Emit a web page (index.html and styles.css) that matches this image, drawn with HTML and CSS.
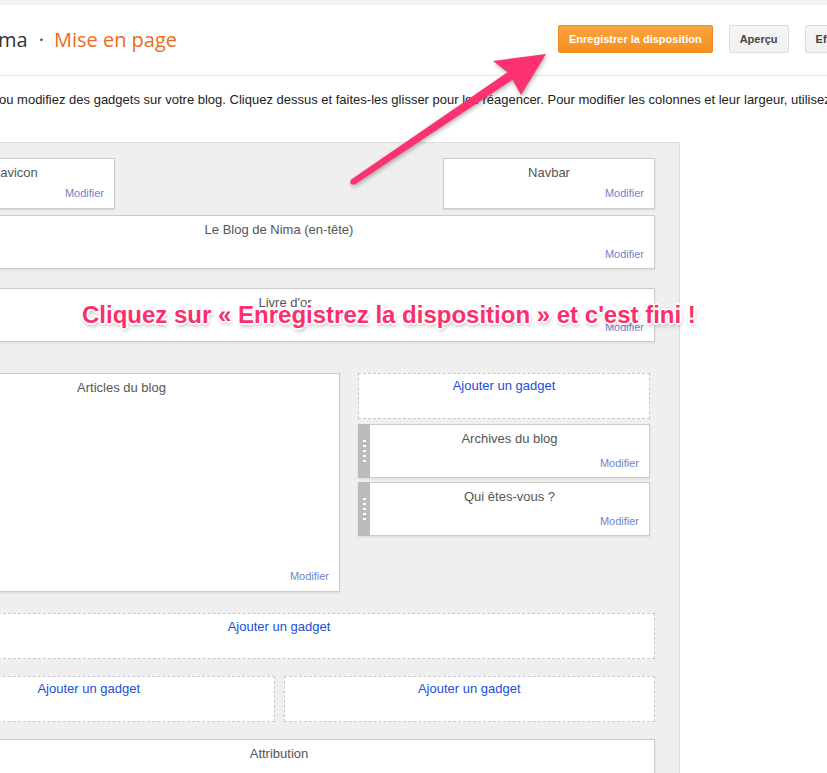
FILE: index.html
```html
<!DOCTYPE html>
<html lang="fr">
<head>
<meta charset="utf-8">
<title>Mise en page</title>
<link rel="stylesheet" href="styles.css">
</head>
<body>
<div class="topbar"></div>
<header class="header">
  <h1 class="title"><span class="blogname">ma</span><span class="sep">·</span><span class="section">Mise en page</span></h1>
  <div class="actions">
    <button class="btn btn-primary">Enregistrer la disposition</button>
    <button class="btn">Aperçu</button>
    <button class="btn">Effacer les modifications</button>
  </div>
</header>
<p class="intro">ou modifiez des gadgets sur votre blog. Cliquez dessus et faites-les glisser pour les réagencer. Pour modifier les colonnes et leur largeur, utilisez le Concepteur de modèles.</p>

<section class="layout">
  <div class="row row-top">
    <div class="widget w-small w-favicon">
      <div class="widget-title">Favicon</div>
      <a class="modifier">Modifier</a>
    </div>
    <div class="widget w-small w-navbar">
      <div class="widget-title">Navbar</div>
      <a class="modifier">Modifier</a>
    </div>
  </div>

  <div class="row row-header">
    <div class="widget w-full">
      <div class="widget-title">Le Blog de Nima (en-tête)</div>
      <a class="modifier">Modifier</a>
    </div>
  </div>

  <div class="row row-cross">
    <div class="widget w-full">
      <div class="widget-title title-shift">Livre d'or</div>
      <a class="modifier">Modifier</a>
    </div>
  </div>

  <div class="row row-main">
    <div class="widget w-main">
      <div class="widget-title">Articles du blog</div>
      <a class="modifier">Modifier</a>
    </div>
    <div class="sidebar">
      <div class="add-gadget"><a class="add-link">Ajouter un gadget</a></div>
      <div class="widget w-handle">
        <div class="handle"><span class="grip"></span></div>
        <div class="handle-body">
          <div class="widget-title">Archives du blog</div>
          <a class="modifier">Modifier</a>
        </div>
      </div>
      <div class="widget w-handle">
        <div class="handle"><span class="grip"></span></div>
        <div class="handle-body">
          <div class="widget-title">Qui êtes-vous ?</div>
          <a class="modifier">Modifier</a>
        </div>
      </div>
    </div>
  </div>

  <div class="row row-footer1">
    <div class="add-gadget add-full"><a class="add-link">Ajouter un gadget</a></div>
  </div>

  <div class="row row-footer2">
    <div class="add-gadget add-half"><a class="add-link">Ajouter un gadget</a></div>
    <div class="add-gadget add-half"><a class="add-link">Ajouter un gadget</a></div>
  </div>

  <div class="row row-footer3">
    <div class="widget w-full w-attrib">
      <div class="widget-title">Attribution</div>
      <a class="modifier">Modifier</a>
    </div>
  </div>
</section>

<div class="callout">Cliquez sur « Enregistrez la disposition » et c'est fini !</div>
<svg class="arrow" width="827" height="773" viewBox="0 0 827 773" aria-hidden="true">
  <polygon points="351.2,179.6 507.5,72.3 493,61 546,54 521,95 512.5,79.7 354.6,184.4" fill="#fc3270"/>
  <circle cx="352.9" cy="182" r="2.6" fill="#fc3270"/>
</svg>
</body>
</html>
```
FILE: styles.css
```css
html, body {
  margin: 0;
  padding: 0;
  overflow: hidden;
  background: #fff;
}
body {
  font-family: "Liberation Sans", Arial, sans-serif;
  color: #222;
  width: 827px;
  height: 773px;
  position: relative;
}

.topbar {
  height: 5px;
  background: #f1f1f1;
}

.header {
  display: flex;
  align-items: flex-start;
  padding-top: 20px;
  height: 50px;
  border-bottom: 1px solid #e5e5e5;
  white-space: nowrap;
}
.title {
  flex: 0 0 560px;
  margin: 1px 0 0 -2px;
  font-family: "Open Sans", sans-serif;
  font-weight: normal;
  font-size: 20px;
  line-height: 28px;
  color: #333;
}
.sep {
  margin: 0 10px 0 11px;
  color: #444;
}
.section {
  color: #f06a19;
}
.actions {
  display: flex;
  gap: 16px;
  flex-shrink: 0;
}
.btn {
  height: 28px;
  padding: 0 10px;
  font-family: "Liberation Sans", Arial, sans-serif;
  font-weight: bold;
  font-size: 11px;
  color: #444;
  background: linear-gradient(#f5f5f5, #f1f1f1);
  border: 1px solid #dcdcdc;
  border-radius: 2px;
  white-space: nowrap;
}
.btn-primary {
  padding: 0 10px;
  color: #fff;
  background: linear-gradient(#f9a43f, #f5901f);
  border-color: #ec8a25;
}

.intro {
  margin: 16px 0 34px -1px;
  font-size: 13px;
  line-height: 16px;
  color: #222;
  white-space: nowrap;
}

.layout {
  margin-left: -121px;
  width: 752px;
  padding: 15px 24px 40px;
  background: #efefef;
  border-top: 1px solid #dcdcdc;
  border-right: 1px solid #dcdcdc;
}
.row {
  display: flex;
}
.row-top {
  justify-content: space-between;
}
.row-header { margin-top: 6px; }
.row-cross { margin-top: 19px; }
.row-main { margin-top: 31px; gap: 18px; align-items: flex-start; }
.row-footer1 { margin-top: 21px; }
.row-footer2 { margin-top: 17px; gap: 9px; }
.row-footer3 { margin-top: 17px; }

.widget {
  box-sizing: border-box;
  display: flex;
  flex-direction: column;
  padding: 6px 10px 7px;
  background: #fff;
  border: 1px solid #cccccc;
  box-shadow: 0 1px 2px rgba(0, 0, 0, 0.1);
}
.widget-title {
  font-size: 13px;
  line-height: 16px;
  color: #555;
  text-align: center;
}
.title-shift {
  padding-left: 12px;
}
.modifier {
  margin-top: auto;
  align-self: flex-end;
  font-size: 11px;
  line-height: 13px;
  color: #6f86c9;
}

.w-small {
  width: 212px;
  height: 51px;
  padding-bottom: 8px;
}
.w-favicon {
  width: 200px;
  margin-left: 12px;
}
.w-full {
  width: 752px;
  height: 54px;
}
.w-attrib {
  height: 80px;
}
.w-main {
  width: 437px;
  height: 219px;
  padding-bottom: 8px;
}

.sidebar {
  width: 292px;
  display: flex;
  flex-direction: column;
}
.add-gadget {
  box-sizing: border-box;
  height: 46px;
  padding-top: 2px;
  background: #fff;
  border: 1px dashed #c8c8c8;
  text-align: center;
}
.sidebar .add-gadget {
  margin-bottom: 5px;
}
.add-full {
  width: 752px;
  padding-top: 3px;
}
.add-half {
  flex: 1;
  padding-top: 2px;
}
.add-link {
  font-size: 13px;
  line-height: 16px;
  color: #1a4fd8;
}

.w-handle {
  flex-direction: row;
  height: 54px;
  padding: 0;
  border-left-color: #bbb;
}
.w-handle + .w-handle {
  margin-top: 4px;
}
.handle {
  width: 11px;
  margin: -1px 0;
  background: #bbb;
  display: flex;
  align-items: center;
  justify-content: center;
}
.grip {
  display: block;
  width: 3px;
  height: 22px;
  background: repeating-linear-gradient(to bottom, #fff 0, #fff 2px, transparent 2px, transparent 5px);
}
.handle-body {
  flex: 1;
  display: flex;
  flex-direction: column;
  padding: 6px 10px 7px;
}

.callout {
  position: absolute;
  left: 82px;
  top: 301px;
  font-family: "Liberation Sans", Arial, sans-serif;
  font-weight: bold;
  font-size: 24px;
  line-height: 28px;
  color: #fb2f6c;
  white-space: nowrap;
  text-shadow:
    -1px -1px 0 #fff, 1px -1px 0 #fff, -1px 1px 0 #fff, 1px 1px 0 #fff,
    0 -2px 0 #fff, 0 2px 0 #fff, -2px 0 0 #fff, 2px 0 0 #fff,
    1px 3px 4px rgba(0, 0, 0, 0.35);
}

.arrow {
  position: absolute;
  left: 0;
  top: 0;
  pointer-events: none;
  filter: drop-shadow(1px 2px 2px rgba(0, 0, 0, 0.3));
}
```
